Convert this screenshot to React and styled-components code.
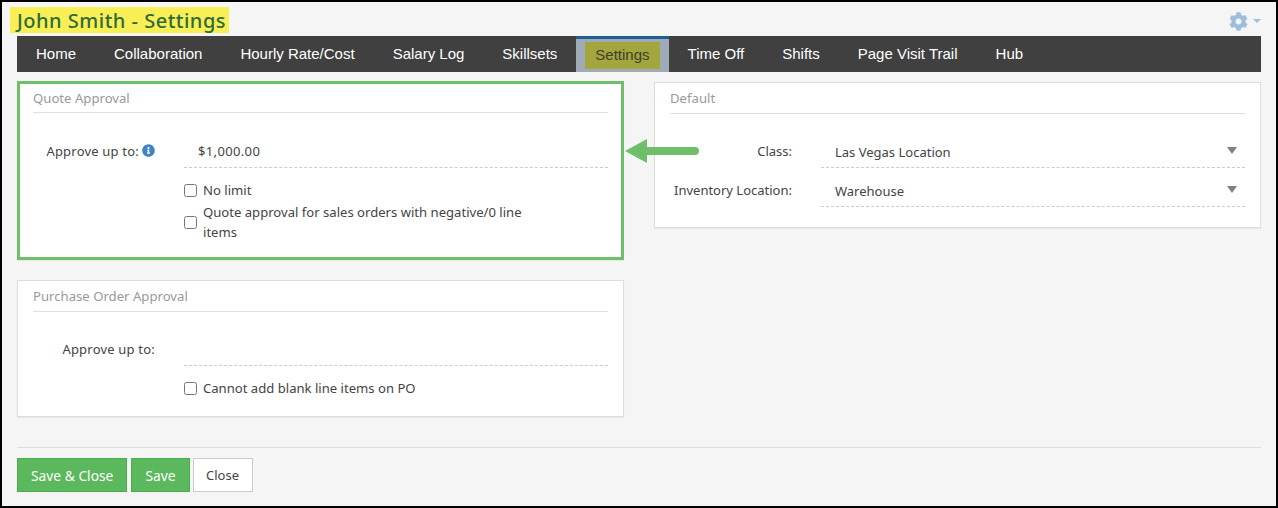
import React from 'react';
import styled, { createGlobalStyle } from 'styled-components';
import { FaCog, FaInfoCircle } from 'react-icons/fa';

const GlobalStyle = createGlobalStyle`
  html, body {
    margin: 0;
    padding: 0;
    background: #000000;
  }
  * {
    box-sizing: border-box;
  }
`;

const Frame = styled.div`
  position: relative;
  width: 1274px;
  height: 504px;
  margin: 2px;
  padding: 5px 15px 0 15px;
  background: #f5f5f5;
  font-family: 'Noto Sans', 'Open Sans', sans-serif;
  font-size: 13px;
  color: #444444;
  overflow: hidden;
`;

const Header = styled.div`
  display: flex;
  align-items: center;
  justify-content: space-between;
  height: 26px;
  margin-bottom: 3px;
`;

const Title = styled.h1`
  margin: 0 0 0 -7px;
  padding: 1px 3px 0 7px;
  height: 26px;
  line-height: 26px;
  background: #f8ee55;
  color: #2e6b38;
  font-size: 20px;
  font-weight: 500;
  letter-spacing: 0.5px;
`;

const GearMenu = styled.div`
  display: flex;
  align-items: center;
  gap: 5px;
  color: #9dbfdc;
  margin-top: 2px;
`;

const Caret = styled.span`
  width: 0;
  height: 0;
  border-left: 4px solid transparent;
  border-right: 4px solid transparent;
  border-top: 4px solid #9dbfdc;
`;

const Nav = styled.nav`
  display: flex;
  height: 36px;
  background: #404040;
`;

const Tab = styled.a`
  display: flex;
  align-items: center;
  padding: ${(p) => (p.$active ? '3px 9px 3px' : '0 19px 2px')};
  font-family: 'Liberation Sans', Arial, sans-serif;
  font-size: 15px;
  color: #ffffff;
  background: ${(p) => (p.$active ? '#a0abb9' : 'transparent')};
  border-top: ${(p) => (p.$active ? '3px solid #205e96' : 'none')};
`;

const TabMark = styled.span`
  display: flex;
  align-items: center;
  height: 27px;
  padding: 0 10px 3px;
  background: #a2a63c;
  color: #404030;
`;

const Columns = styled.div`
  display: grid;
  grid-template-columns: 607px 607px;
  gap: 30px;
  margin-top: 9px;
  align-items: start;
`;

const Column = styled.div`
  display: flex;
  flex-direction: column;
  gap: 20px;
  margin-top: ${(p) => p.$offset || 0}px;
`;

const Card = styled.section`
  background: #ffffff;
  border: ${(p) => (p.$marked ? '3px solid #6fbe6a' : '1px solid #dddddd')};
  padding: ${(p) => (p.$marked ? '0 13px' : '0 15px')};
  height: ${(p) => p.$height}px;
  box-shadow: 0 1px 1px rgba(0, 0, 0, 0.05);
`;

const CardTitle = styled.div`
  height: ${(p) => (p.$marked ? '29px' : '31px')};
  line-height: ${(p) => (p.$marked ? '29px' : '31px')};
  border-bottom: 1px solid #e0e0e0;
  color: #999999;
  font-size: 13.15px;
`;

const Body = styled.div`
  padding-top: ${(p) => (p.$marked ? '20px' : '19px')};
`;

const Row = styled.div`
  display: grid;
  grid-template-columns: 122px 1fr;
  column-gap: 29px;
  align-items: center;
  height: 35px;
  margin-bottom: 4px;
`;

const Label = styled.label`
  display: flex;
  align-items: center;
  justify-content: flex-end;
  gap: 3px;
  color: #444444;
  white-space: nowrap;
  letter-spacing: ${(p) => (p.$tracked ? '0.2px' : 'normal')};
`;

const Field = styled.div`
  position: relative;
  display: flex;
  align-items: center;
  height: 35px;
  padding: ${(p) => (p.$select ? '4px' : '2px')} 0 0 14px;
  border-bottom: 1px dashed #cccccc;
  letter-spacing: ${(p) => (p.$tracked ? '0.35px' : 'normal')};
`;

const SelectArrow = styled.span`
  position: absolute;
  right: 8px;
  top: 14px;
  width: 0;
  height: 0;
  border-left: 5px solid transparent;
  border-right: 5px solid transparent;
  border-top: 7px solid #808080;
`;

const Checks = styled.div`
  display: flex;
  flex-direction: column;
  gap: 2px;
  margin-left: 151px;
  margin-top: 12px;
`;

const Check = styled.label`
  display: flex;
  align-items: center;
  gap: 6px;
  line-height: 20px;
  max-width: 350px;
  color: #444444;
  font-size: 13.1px;

  input {
    width: 13px;
    height: 13px;
    margin: 0;
    flex: none;
  }
`;

const Footer = styled.div`
  display: flex;
  gap: 4px;
  margin-top: 30px;
  padding-top: 10px;
  border-top: 1px solid #dddddd;
`;

const Button = styled.button`
  height: 34px;
  padding: 0 ${(p) => (p.$primary ? '13px' : '12.5px')};
  margin-left: ${(p) => (p.$primary ? '0' : '-1px')};
  font-family: 'Noto Sans', 'Open Sans', sans-serif;
  font-size: ${(p) => (p.$primary ? '13.8px' : '13px')};
  color: ${(p) => (p.$primary ? '#ffffff' : '#444444')};
  background: ${(p) => (p.$primary ? '#5cb85c' : '#ffffff')};
  border: 1px solid ${(p) => (p.$primary ? '#4cae4c' : '#cccccc')};
`;

const Arrow = styled.svg`
  position: absolute;
  left: 623px;
  top: 137px;
`;

const tabs = ['Home', 'Collaboration', 'Hourly Rate/Cost', 'Salary Log', 'Skillsets', 'Settings', 'Time Off', 'Shifts', 'Page Visit Trail', 'Hub'];

export default function App() {
  return (
    <>
      <GlobalStyle />
      <Frame>
        <Header>
          <Title>John Smith - Settings</Title>
          <GearMenu>
            <FaCog size={19} />
            <Caret />
          </GearMenu>
        </Header>
        <Nav>
          {tabs.map((t) =>
            t === 'Settings' ? (
              <Tab key={t} $active>
                <TabMark>{t}</TabMark>
              </Tab>
            ) : (
              <Tab key={t}>{t}</Tab>
            )
          )}
        </Nav>
        <Columns>
          <Column>
            <Card $marked $height={179}>
              <CardTitle $marked>Quote Approval</CardTitle>
              <Body $marked>
                <Row>
                  <Label $tracked>
                    Approve up to: <FaInfoCircle size={13} color="#3d85c6" />
                  </Label>
                  <Field $tracked>$1,000.00</Field>
                </Row>
                <Checks>
                  <Check>
                    <input type="checkbox" /> No limit
                  </Check>
                  <Check>
                    <input type="checkbox" /> Quote approval for sales orders with negative/0 line items
                  </Check>
                </Checks>
              </Body>
            </Card>
            <Card $height={137}>
              <CardTitle>Purchase Order Approval</CardTitle>
              <Body>
                <Row>
                  <Label $tracked>Approve up to:</Label>
                  <Field />
                </Row>
                <Checks>
                  <Check>
                    <input type="checkbox" /> Cannot add blank line items on PO
                  </Check>
                </Checks>
              </Body>
            </Card>
          </Column>
          <Column $offset={1}>
            <Card $height={146}>
              <CardTitle>Default</CardTitle>
              <Body>
                <Row>
                  <Label>Class:</Label>
                  <Field $select>
                    Las Vegas Location
                    <SelectArrow />
                  </Field>
                </Row>
                <Row>
                  <Label>Inventory Location:</Label>
                  <Field $select>
                    Warehouse
                    <SelectArrow />
                  </Field>
                </Row>
              </Body>
            </Card>
          </Column>
        </Columns>
        <Footer>
          <Button $primary>Save &amp; Close</Button>
          <Button $primary>Save</Button>
          <Button>Close</Button>
        </Footer>
        <Arrow width="76" height="24" viewBox="0 0 76 24">
          <path d="M0 12 L22 0 V8 H70 a4 4 0 0 1 0 8 H22 V24 Z" fill="#6fbe6a" />
        </Arrow>
      </Frame>
    </>
  );
}
